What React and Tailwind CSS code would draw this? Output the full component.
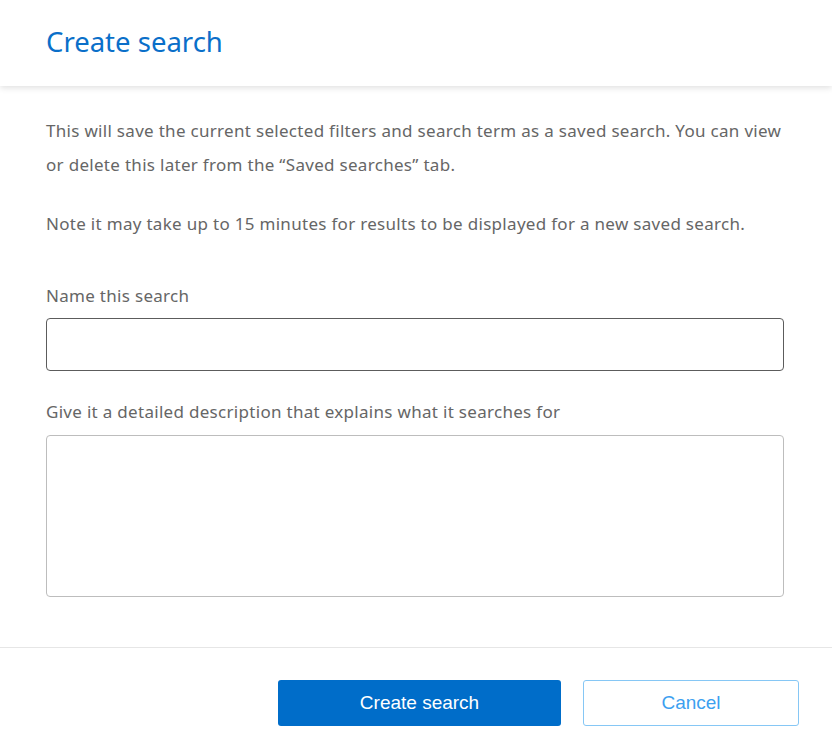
export default function App() {
  return (
    <div className="w-[832px] h-[749px] bg-white overflow-hidden flex flex-col" style={{ fontFamily: '"Noto Sans", "Open Sans", sans-serif' }}>
      <div className="h-[86px] shrink-0 bg-white shadow-[0_2px_6px_rgba(0,0,0,0.12)] relative z-10 flex items-center px-[46px]">
        <h1 className="text-[27.5px] text-[#0a6fc9] font-normal leading-none mb-[2px]">Create search</h1>
      </div>
      <div className="px-[46px] pt-[28px] text-[17px] tracking-[0.3px] text-[#666666]">
        <p className="leading-[34px]">This will save the current selected filters and search term as a saved search. You can view or delete this later from the “Saved searches” tab.</p>
        <p className="leading-[34px] mt-[25px]">Note it may take up to 15 minutes for results to be displayed for a new saved search.</p>
        <label className="block leading-[34px] mt-[38px]">Name this search</label>
        <input className="block mt-[5px] w-[738px] h-[53px] border border-[#5c5c5c] rounded-[4px] outline-none" />
        <label className="block leading-[34px] mt-[24px]">Give it a detailed description that explains what it searches for</label>
        <textarea className="block mt-[6px] w-[738px] h-[162px] border border-[#bdbdbd] rounded-[4px] outline-none resize-none" />
      </div>
      <div className="mt-[50px] border-t border-[#e6e6e6] flex justify-end gap-[22px] pt-[32px] pr-[33px]" style={{ fontFamily: '"Liberation Sans", Arial, sans-serif' }}>
        <button className="w-[283px] h-[46px] bg-[#006dc9] rounded-[3px] text-white text-[19px]">Create search</button>
        <button className="w-[216px] h-[46px] bg-white border border-[#86c7f5] rounded-[3px] text-[#3d9ff0] text-[19px]">Cancel</button>
      </div>
    </div>
  );
}
